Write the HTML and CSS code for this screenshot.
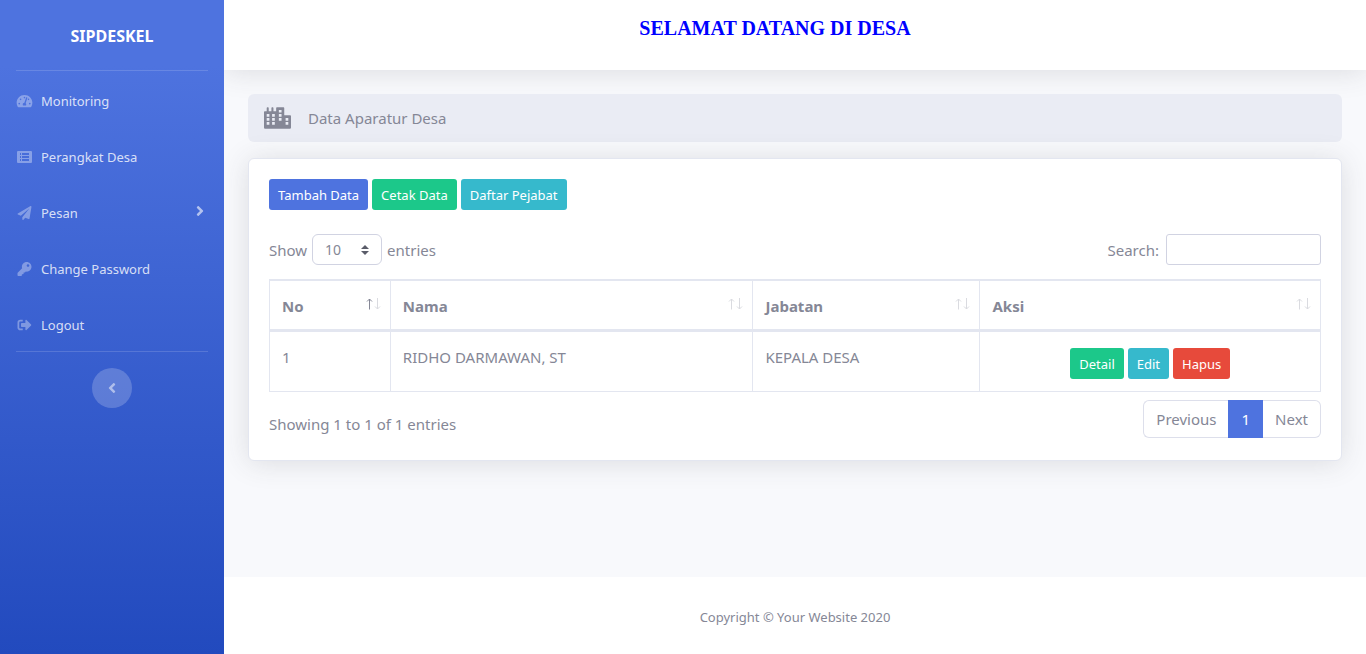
FILE: index.html
```html
<!DOCTYPE html>
<html lang="id">
<head>
<meta charset="utf-8">
<meta name="viewport" content="width=device-width, initial-scale=1">
<title>SIPDESKEL - Data Aparatur Desa</title>
<link rel="stylesheet" href="styles.css">
</head>
<body>
<svg class="sprite" aria-hidden="true">
  <symbol id="sort" viewBox="0 0 16 12">
    <path class="sort-up" d="M3.5 11.5V1M1 3.5L3.5 1L6 3.5" fill="none" stroke="currentColor"/>
    <path class="sort-down" d="M11.5 0V11M9 8.5L11.5 11L14 8.5" fill="none" stroke="currentColor"/>
  </symbol>
</svg>
<div class="wrapper">
  <nav class="sidebar">
    <a class="brand" href="#">SIPDESKEL</a>
    <hr class="divider">
    <ul class="menu">
      <li><a class="menu-link" href="#">
        <svg class="menu-icon" viewBox="0 0 576 512"><path d="M288 32C128.94 32 0 160.94 0 320c0 52.8 14.25 102.26 39.06 144.8 5.61 9.62 16.3 15.2 27.44 15.2h443c11.14 0 21.83-5.58 27.44-15.2C561.75 422.26 576 372.8 576 320c0-159.06-128.94-288-288-288zm0 64c14.71 0 26.58 10.13 30.32 23.65-1.11 2.26-2.64 4.23-3.45 6.67l-9.22 27.67c-5.13 3.49-10.97 6.01-17.64 6.01-17.67 0-32-14.33-32-32S270.33 96 288 96zM96 384c-17.67 0-32-14.33-32-32s14.33-32 32-32 32 14.33 32 32-14.33 32-32 32zm48-160c-17.67 0-32-14.33-32-32s14.33-32 32-32 32 14.33 32 32-14.33 32-32 32zm246.77-72.41l-61.33 184C343.13 347.33 352 364.54 352 384c0 11.72-3.38 22.55-8.88 32H232.88c-5.5-9.45-8.88-20.28-8.88-32 0-33.94 26.5-61.43 59.9-63.59l61.34-184.01c4.17-12.56 17.73-19.45 30.36-15.17 12.57 4.19 19.35 17.79 15.17 30.36zm14.66 57.2l15.52-46.55c3.47-1.29 7.13-2.23 11.05-2.23 17.67 0 32 14.33 32 32s-14.33 32-32 32c-11.38-.01-20.89-6.28-26.57-15.22zM480 384c-17.67 0-32-14.33-32-32s14.33-32 32-32 32 14.33 32 32-14.33 32-32 32z"/></svg>
        <span>Monitoring</span></a></li>
      <li><a class="menu-link" href="#">
        <svg class="menu-icon" viewBox="0 0 17 14"><path fill-rule="evenodd" d="M2 1h13a1 1 0 0 1 1 1v10a1 1 0 0 1-1 1H2a1 1 0 0 1-1-1V2a1 1 0 0 1 1-1zM4 3h1v2H4zM6 3h7v2H6zM4 6h1v2H4zM6 6h7v2H6zM4 9h1v2H4zM6 9h7v2H6z"/></svg>
        <span>Perangkat Desa</span></a></li>
      <li><a class="menu-link" href="#">
        <svg class="menu-icon" viewBox="0 0 512 512"><path d="M476 3.2L12.5 270.6c-18.1 10.4-15.8 35.6 2.2 43.2L121 358.4l287.3-253.2c5.5-4.9 13.3 2.6 8.6 8.3L176 407v80.5c0 23.6 28.5 32.9 42.5 15.8L282 426l124.6 52.2c14.2 6 30.4-2.9 33-18.2l72-432C515 7.8 493.3-6.8 476 3.2z"/></svg>
        <span>Pesan</span>
        <svg class="menu-arrow" viewBox="0 0 256 512"><path d="M224.3 273l-136 136c-9.4 9.4-24.6 9.4-33.9 0l-22.6-22.6c-9.4-9.4-9.4-24.6 0-33.9l96.4-96.4-96.4-96.4c-9.4-9.4-9.4-24.6 0-33.9L54.3 103c9.4-9.4 24.6-9.4 33.9 0l136 136c9.5 9.4 9.5 24.6.1 34z"/></svg></a></li>
      <li><a class="menu-link" href="#">
        <svg class="menu-icon" viewBox="0 0 512 512"><path d="M512 176.001C512 273.203 433.202 352 336 352c-11.22 0-22.19-1.062-32.827-3.069l-24.012 27.014A23.999 23.999 0 0 1 261.223 384H224v40c0 13.255-10.745 24-24 24h-40v40c0 13.255-10.745 24-24 24H24c-13.255 0-24-10.745-24-24v-78.059c0-6.365 2.529-12.47 7.029-16.971l161.802-161.802C163.108 213.814 160 195.271 160 176 160 78.798 238.797.001 335.999 0 433.488-.001 512 78.511 512 176.001zM336 128c0 26.51 21.49 48 48 48s48-21.49 48-48-21.49-48-48-48-48 21.49-48 48z"/></svg>
        <span>Change Password</span></a></li>
      <li><a class="menu-link" href="#">
        <svg class="menu-icon" viewBox="0 0 512 512"><path d="M497 273L329 441c-15 15-41 4.500-41-17v-96H152c-13.300 0-24-10.700-24-24v-96c0-13.300 10.700-24 24-24h136V88c0-21.400 25.900-32 41-17l168 168c9.300 9.400 9.300 24.600 0 34zM192 436v-40c0-6.600-5.400-12-12-12H96c-17.700 0-32-14.300-32-32V160c0-17.700 14.300-32 32-32h84c6.600 0 12-5.400 12-12V76c0-6.600-5.400-12-12-12H96c-53 0-96 43-96 96v192c0 53 43 96 96 96h84c6.600 0 12-5.400 12-12z"/></svg>
        <span>Logout</span></a></li>
    </ul>
    <hr class="divider">
    <button class="toggle" type="button" aria-label="Toggle sidebar">
      <svg class="toggle-icon" viewBox="0 0 256 512"><path d="M31.700 239l136-136c9.400-9.400 24.600-9.400 33.900 0l22.600 22.600c9.400 9.400 9.400 24.600 0 33.900L127.900 256l96.400 96.400c9.400 9.400 9.400 24.600 0 33.900L201.700 409c-9.400 9.400-24.600 9.400-33.900 0l-136-136c-9.500-9.400-9.500-24.600-.1-34z"/></svg>
    </button>
  </nav>

  <div class="content">
    <header class="topbar"><h1 class="welcome">SELAMAT DATANG DI DESA</h1></header>

    <main class="main">
      <div class="page-title">
        <svg class="city" viewBox="0 0 640 512"><path fill-rule="evenodd" d="M616 192H480V24c0-13.260-10.740-24-24-24H312c-13.260 0-24 10.740-24 24v72h-64V16c0-8.840-7.160-16-16-16h-16c-8.840 0-16 7.160-16 16v80h-64V16c0-8.840-7.160-16-16-16H80c-8.840 0-16 7.160-16 16v80H24c-13.260 0-24 10.740-24 24v360c0 17.670 14.330 32 32 32h576c17.670 0 32-14.330 32-32V216c0-13.260-10.740-24-24-24zM64 160h64v64H64zM64 256h64v64H64zM64 352h64v64H64zM192 160h64v64h-64zM192 256h64v64h-64zM192 352h64v64h-64zM352 64h64v64h-64zM352 160h64v64h-64zM352 256h64v64h-64zM512 256h64v64h-64zM512 352h64v64h-64z"/></svg>
        <span>Data Aparatur Desa</span>
      </div>

      <section class="card">
        <div class="actions">
          <button class="btn btn-primary" type="button">Tambah Data</button>
          <button class="btn btn-success" type="button">Cetak Data</button>
          <button class="btn btn-info" type="button">Daftar Pejabat</button>
        </div>

        <div class="filters">
          <label class="length">Show
            <select class="field length-select"><option>10</option><option>25</option><option>50</option><option>100</option></select>
            entries</label>
          <label class="search">Search: <input class="field search-input" type="search"></label>
        </div>

        <table class="table">
          <colgroup><col class="col-no"><col class="col-name"><col class="col-role"><col class="col-action"></colgroup>
          <thead>
            <tr>
              <th class="sorted"><div class="head">No <svg class="sort"><use href="#sort"/></svg></div></th>
              <th><div class="head">Nama <svg class="sort"><use href="#sort"/></svg></div></th>
              <th><div class="head">Jabatan <svg class="sort"><use href="#sort"/></svg></div></th>
              <th><div class="head">Aksi <svg class="sort"><use href="#sort"/></svg></div></th>
            </tr>
          </thead>
          <tbody>
            <tr>
              <td>1</td>
              <td>RIDHO DARMAWAN, ST</td>
              <td>KEPALA DESA</td>
              <td><div class="row-actions">
                <button class="btn btn-success" type="button">Detail</button>
                <button class="btn btn-info" type="button">Edit</button>
                <button class="btn btn-danger" type="button">Hapus</button>
              </div></td>
            </tr>
          </tbody>
        </table>

        <div class="table-footer">
          <div class="summary">Showing 1 to 1 of 1 entries</div>
          <nav class="pagination" aria-label="Pagination">
            <a class="page" href="#">Previous</a>
            <a class="page page-active" href="#">1</a>
            <a class="page" href="#">Next</a>
          </nav>
        </div>
      </section>
    </main>

    <footer class="footer">Copyright © Your Website 2020</footer>
  </div>
</div>
</body>
</html>
```
FILE: styles.css
```css
*, *::before, *::after { box-sizing: border-box; }

body {
  margin: 0;
  font-family: "Noto Sans", sans-serif;
  font-size: 15px;
  line-height: 24px;
  color: #858796;
  background: #f8f9fc;
}

a { text-decoration: none; }
.sprite { position: absolute; width: 0; height: 0; }
.wrapper { display: flex; min-height: 100vh; }

/* Sidebar */
.sidebar {
  flex: 0 0 224px;
  z-index: 1;
  display: flex;
  flex-direction: column;
  background: linear-gradient(180deg, #4e73df 10%, #224abe 100%);
}
.brand {
  display: flex;
  align-items: center;
  justify-content: center;
  height: 70px;
  padding-top: 2px;
  font-size: 16px;
  font-weight: 700;
  color: #fff;
}
.divider {
  width: calc(100% - 32px);
  margin: 0 16px;
  border: 0;
  border-top: 1px solid rgba(255, 255, 255, 0.15);
}
.menu { margin: 0; padding: 0; list-style: none; }
.menu-link {
  display: flex;
  align-items: center;
  gap: 8px;
  height: 56px;
  padding: 4px 16px 0;
  font-size: 13px;
  color: rgba(255, 255, 255, 0.8);
}
.menu-icon { width: 17px; height: 14px; fill: rgba(255, 255, 255, 0.35); }
.menu-arrow { width: 8px; height: 16px; margin: 0 4px 4px auto; fill: rgba(255, 255, 255, 0.6); }
.toggle {
  display: flex;
  align-items: center;
  justify-content: center;
  align-self: center;
  width: 40px;
  height: 40px;
  margin: 16px 0;
  padding: 0;
  border: 0;
  border-radius: 50%;
  background: rgba(255, 255, 255, 0.2);
}
.toggle-icon { width: 8px; height: 16px; fill: rgba(255, 255, 255, 0.5); }

/* Page frame */
.content { flex: 1; min-width: 0; display: flex; flex-direction: column; }
.topbar {
  height: 70px;
  padding: 16px 40px 0 0;
  background: #fff;
  box-shadow: 0 2px 28px rgba(58, 59, 69, 0.15);
  text-align: center;
}
.welcome {
  margin: 0;
  font: bold 20px/24px "Liberation Serif", serif;
  color: #00f;
}
.main { flex: 1; padding: 24px; }
.page-title {
  display: flex;
  align-items: center;
  gap: 17px;
  margin-bottom: 16px;
  padding: 12px 16px;
  border-radius: 6px;
  background: #eaecf4;
}
.city { width: 27px; height: 22px; fill: currentColor; }
.card {
  padding: 20px;
  border: 1px solid #e3e6f0;
  border-radius: 6px;
  background: #fff;
  box-shadow: 0 2px 28px rgba(58, 59, 69, 0.15);
}
.footer {
  padding: 28px 24px 25px;
  background: #fff;
  font-size: 13px;
  text-align: center;
}

/* Buttons */
.btn {
  height: 31px;
  padding: 1px 9px 0;
  border: 0;
  border-radius: 3px;
  font: 13px/21px "Noto Sans", sans-serif;
  color: #fff;
}
.btn-primary { background: #4e73df; }
.btn-success { background: #1cc88a; }
.btn-info { background: #36b9cc; }
.btn-danger { background: #e74a3b; }
.actions { display: flex; gap: 4px; margin-bottom: 24px; }
.row-actions { display: flex; justify-content: center; gap: 4px; padding-top: 3px; }

/* Table controls */
.filters { display: flex; justify-content: space-between; margin-bottom: 14px; }
.length, .search { display: flex; align-items: center; gap: 5px; }
.search { gap: 7px; }
.field {
  height: 31px;
  border: 1px solid #d1d3e2;
  background-color: #fff;
  font: 14px/21px "Noto Sans", sans-serif;
  color: #858796;
}
.length-select {
  width: 70px;
  padding: 0 12px;
  border-radius: 6px;
  appearance: none;
  background-image: url("data:image/svg+xml,%3csvg xmlns='http://www.w3.org/2000/svg' viewBox='0 0 4 5'%3e%3cpath fill='%235a5c69' d='M2 0L0 2h4zm0 5L0 3h4z'/%3e%3c/svg%3e");
  background-repeat: no-repeat;
  background-position: right 12px center;
  background-size: 8px 10px;
}
.search-input { width: 155px; padding: 4px 8px; border-radius: 3px; appearance: none; }

/* Table */
.table {
  width: 100%;
  table-layout: fixed;
  border-collapse: separate;
  border-spacing: 0;
  border: solid #e3e6f0;
  border-width: 1px 0 0 1px;
}
.col-no { width: 11.5%; }
.col-name { width: 34.5%; }
.col-role { width: 21.6%; }
.col-action { width: 32.4%; }
.table th, .table td {
  padding: 13px 12px 12px;
  border: solid #e3e6f0;
  border-width: 0 1px 1px 0;
  text-align: left;
  vertical-align: top;
}
.table th { padding: 13px 8px 11px 12px; border-width: 1px 1px 3px 0; font-weight: 700; }
.head { display: flex; justify-content: space-between; }
.sort { width: 16px; height: 12px; margin-top: 4px; color: #dadbe0; }
.sorted .sort { --up: #858796; }
.sort-up { color: var(--up, #dadbe0); }

.table-footer { display: flex; align-items: center; justify-content: space-between; padding: 8px 0 2px; }
.summary { padding-top: 10px; }
.pagination { display: flex; }
.page {
  padding: 6px 12px;
  border: solid #dddfeb;
  border-width: 1px 0;
  color: #858796;
}
.page:first-child { border-left-width: 1px; border-radius: 6px 0 0 6px; }
.page:last-child { border-right-width: 1px; border-radius: 0 6px 6px 0; }
.page-active { border-color: #4e73df; background: #4e73df; color: #fff; padding: 6px 13px; }
```
